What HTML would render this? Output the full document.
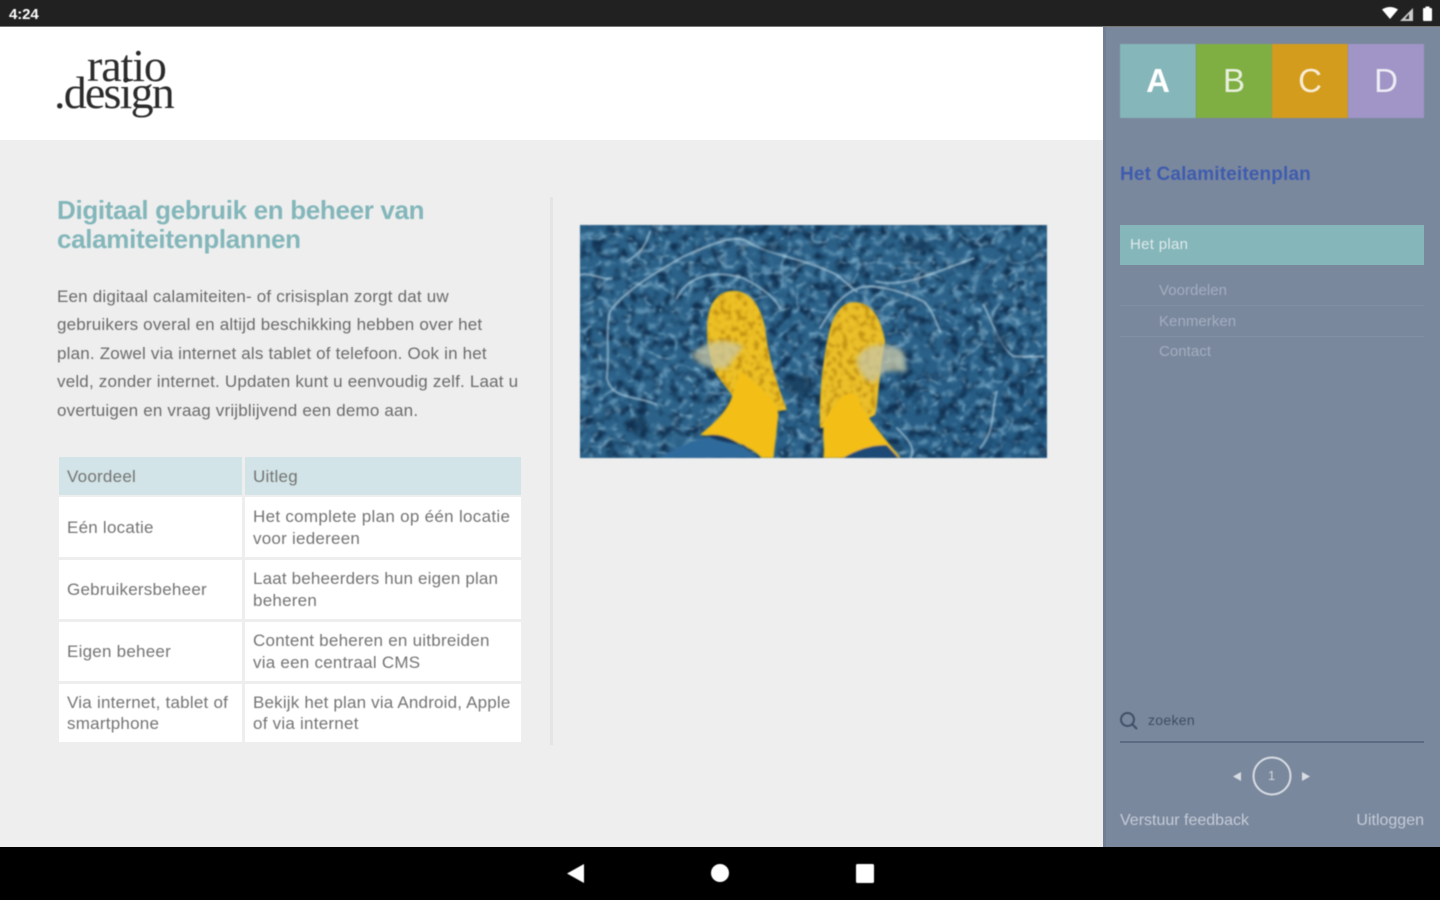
<!DOCTYPE html>
<html lang="nl"><head><meta charset="utf-8"><title>ratio.design</title>
<style>
html,body{margin:0;padding:0;width:1440px;height:900px;overflow:hidden;background:#eee}
body{font-family:"Liberation Sans",sans-serif;position:relative}
.a{position:absolute;white-space:nowrap}
.t{filter:blur(.65px)}
.b{font-size:17px;color:#6b6b6b;line-height:20px;left:57px;letter-spacing:.19px}
.c{font-size:17px;color:#747474;line-height:20px;letter-spacing:.24px}
.n{font-size:15px;color:#a3aebf;left:1159px;line-height:18px;letter-spacing:.05px}
.cell{position:absolute;background:#fff}
.abc{position:absolute;top:44px;height:74px;color:rgba(255,255,255,.82);font-size:33px;line-height:74px;text-align:center}
</style></head><body>
<div class="a" style="left:0;top:0;width:1440px;height:26px;background:#212121;border-bottom:1px solid #777;box-sizing:content-box"></div>
<div class="a t" style="left:9px;top:6px;color:#fff;font-size:15px;line-height:17px;font-weight:bold;letter-spacing:-.1px">4:24</div>
<svg class="a" style="left:1380px;top:5px;filter:blur(.5px)" width="56" height="18" viewBox="0 0 56 18"><path d="M2 4.500Q10 -.5 18 4.500L10 14Z" fill="#fff"/><path d="M33 3V16H20Z" fill="#ccc"/><path d="M29 9V14H25Z" fill="#212121"/><rect x="43" y="3" width="9" height="13" rx="1" fill="#fff"/><rect x="45.500" y="1.500" width="4" height="2" fill="#fff"/></svg>

<div class="a" style="left:0;top:27px;width:1103px;height:113px;background:#fff"></div>
<div class="a t" style="left:87px;top:44px;font-family:'Liberation Serif',serif;font-size:46px;line-height:44px;color:#2b2b2b;letter-spacing:-1.1px">ratio</div>
<div class="a t" style="left:54px;top:71px;font-family:'Liberation Serif',serif;font-size:46px;line-height:44px;color:#2b2b2b;letter-spacing:-1.800px">.design</div>

<div class="a t" style="left:57px;top:196px;font-size:26px;line-height:29px;font-weight:bold;color:#83b6ba;letter-spacing:-.33px">Digitaal gebruik en beheer van<br>calamiteitenplannen</div>
<div class="a t b" style="top:287px">Een digitaal calamiteiten- of crisisplan zorgt dat uw</div>
<div class="a t b" style="top:315px">gebruikers overal en altijd beschikking hebben over het</div>
<div class="a t b" style="top:344px">plan. Zowel via internet als tablet of telefoon. Ook in het</div>
<div class="a t b" style="top:372px">veld, zonder internet. Updaten kunt u eenvoudig zelf. Laat u</div>
<div class="a t b" style="top:401px">overtuigen en vraag vrijblijvend een demo aan.</div>

<div class="cell" style="left:59px;top:457px;width:183px;height:38px;background:#d2e4e7"></div>
<div class="cell" style="left:245px;top:457px;width:276px;height:38px;background:#d2e4e7"></div>
<div class="cell" style="left:59px;top:497px;width:183px;height:60px"></div>
<div class="cell" style="left:245px;top:497px;width:276px;height:60px"></div>
<div class="cell" style="left:59px;top:560px;width:183px;height:59px"></div>
<div class="cell" style="left:245px;top:560px;width:276px;height:59px"></div>
<div class="cell" style="left:59px;top:622px;width:183px;height:59px"></div>
<div class="cell" style="left:245px;top:622px;width:276px;height:59px"></div>
<div class="cell" style="left:59px;top:684px;width:183px;height:58px"></div>
<div class="cell" style="left:245px;top:684px;width:276px;height:58px"></div>

<div class="a t c" style="left:67px;top:467px">Voordeel</div>
<div class="a t c" style="left:253px;top:467px">Uitleg</div>
<div class="a t c" style="left:67px;top:518px">Eén locatie</div>
<div class="a t c" style="left:253px;top:507px;letter-spacing:.3px">Het complete plan op één locatie</div>
<div class="a t c" style="left:253px;top:529px">voor iedereen</div>
<div class="a t c" style="left:67px;top:580px">Gebruikersbeheer</div>
<div class="a t c" style="left:253px;top:569px;letter-spacing:.17px">Laat beheerders hun eigen plan</div>
<div class="a t c" style="left:253px;top:591px">beheren</div>
<div class="a t c" style="left:67px;top:642px">Eigen beheer</div>
<div class="a t c" style="left:253px;top:631px">Content beheren en uitbreiden</div>
<div class="a t c" style="left:253px;top:653px">via een centraal CMS</div>
<div class="a t c" style="left:67px;top:693px">Via internet, tablet of</div>
<div class="a t c" style="left:67px;top:714px">smartphone</div>
<div class="a t c" style="left:253px;top:693px;letter-spacing:.18px">Bekijk het plan via Android, Apple</div>
<div class="a t c" style="left:253px;top:714px">of via internet</div>

<div class="a" style="left:550px;top:197px;width:3px;height:548px;background:#e4e4e4"></div>

<svg class="a" style="left:580px;top:225px;filter:blur(.7px)" width="467" height="233" viewBox="30 30 1400 700" preserveAspectRatio="none">
<defs>
<filter id="w" x="0" y="0" width="100%" height="100%" color-interpolation-filters="sRGB"><feTurbulence type="turbulence" baseFrequency=".011 .014" numOctaves="3" seed="11"/><feColorMatrix values="0 0 0 0 .66  0 0 0 0 .82  0 0 0 0 .91  -9 0 0 0 1.35"/><feGaussianBlur stdDeviation="2.500"/></filter>
<filter id="f" x="0" y="0" width="100%" height="100%" color-interpolation-filters="sRGB"><feTurbulence type="fractalNoise" baseFrequency=".04" numOctaves="3" seed="5"/><feColorMatrix values="0 0 0 0 .55  0 0 0 0 .74  0 0 0 0 .85  5 0 0 0 -2.7"/><feGaussianBlur stdDeviation="3"/></filter>
<filter id="d" x="0" y="0" width="100%" height="100%" color-interpolation-filters="sRGB"><feTurbulence type="fractalNoise" baseFrequency=".03" numOctaves="3" seed="21"/><feColorMatrix values="0 0 0 0 .04  0 0 0 0 .15  0 0 0 0 .27  4 0 0 0 -1.9"/><feGaussianBlur stdDeviation="3"/></filter>
<filter id="s"><feGaussianBlur stdDeviation="2.500"/></filter>
<filter id="s2"><feGaussianBlur stdDeviation="7"/></filter>
<filter id="y" x="0" y="0" width="100%" height="100%" color-interpolation-filters="sRGB"><feTurbulence type="fractalNoise" baseFrequency=".06" numOctaves="2" seed="4"/><feColorMatrix values="0 0 0 0 .72  0 0 0 0 .52  0 0 0 0 .05  6 0 0 0 -3"/><feGaussianBlur stdDeviation="3"/></filter>
<clipPath id="bt"><path d="M490 228C540 228 570 270 585 340C592 410 610 480 650 585L620 590L500 560L440 480C410 420 400 320 425 270C440 240 465 228 490 228ZM850 262C900 262 930 300 945 380C925 470 925 560 915 600L880 600L800 560L750 640C745 540 760 420 780 340C795 290 820 262 850 262Z"/></clipPath>
<linearGradient id="g" x1="0" y1="0" x2="1" y2="1"><stop offset="0" stop-color="#2b6188"/><stop offset=".55" stop-color="#2c6289"/><stop offset="1" stop-color="#245a83"/></linearGradient>
</defs>
<rect x="30" y="30" width="1400" height="700" fill="url(#g)"/>
<rect x="30" y="30" width="1400" height="700" filter="url(#d)" opacity=".8"/>
<rect x="30" y="30" width="1400" height="700" filter="url(#f)" opacity=".5"/>
<rect x="30" y="30" width="1400" height="700" filter="url(#w)" opacity=".45"/>
<g fill="none" stroke="#c7deeb" stroke-width="6" stroke-linecap="round" filter="url(#s)" opacity=".6">
<path d="M120 290C160 230 260 170 340 125C420 90 500 50 540 85C600 120 700 130 800 180C830 205 850 225 860 230"/>
<path d="M30 180C60 170 110 200 125 190M240 50C230 80 220 110 170 140"/>
<path d="M750 340C780 290 810 240 860 222C900 200 1000 230 1060 260C1090 290 1095 320 1110 350"/>
<path d="M320 250C350 190 420 160 520 190C560 210 610 240 630 280"/>
<path d="M120 290C105 350 120 420 110 490C130 560 200 540 260 570"/>
<path d="M1240 270C1270 330 1290 400 1330 425L1420 425"/>
<path d="M1280 530C1260 590 1280 640 1230 700M980 640C1010 670 1040 700 1020 730"/>
<path d="M920 200C1000 220 1100 170 1210 130"/>
</g>
<g fill="#0d2c47" filter="url(#s2)" opacity=".55"><ellipse cx="612" cy="100" rx="40" ry="10"/><ellipse cx="1040" cy="90" rx="45" ry="16"/><ellipse cx="200" cy="630" rx="35" ry="25"/><ellipse cx="1020" cy="520" rx="40" ry="14"/><ellipse cx="1290" cy="380" rx="22" ry="40"/><ellipse cx="690" cy="510" rx="50" ry="30"/></g>
<path d="M270 730C330 690 390 670 440 660L560 725V730Z" fill="#2d6a9b" filter="url(#s)"/>
<g filter="url(#s)">
<path d="M490 228C540 228 570 270 585 340C592 410 610 480 650 585L620 590L610 680L560 640L440 480C410 420 400 320 425 270C440 240 465 228 490 228Z" fill="#edc128"/>
<path d="M850 262C900 262 930 300 945 380C925 470 925 560 915 600L880 620L750 640C745 540 760 420 780 340C795 290 820 262 850 262Z" fill="#ebc02b"/>
</g>
<rect x="380" y="220" width="600" height="430" clip-path="url(#bt)" filter="url(#y)" opacity=".75"/>
<g filter="url(#s)">
<path d="M510 470C560 510 610 540 625 600L610 730H575C550 700 480 670 390 660C440 620 480 580 490 530Z" fill="#f3be18"/>
<path d="M800 560C830 530 860 520 870 570C900 620 950 680 990 728L810 730L760 730C765 680 750 640 770 610Z" fill="#f3be18"/>
<path d="M410 662C450 655 490 670 560 722L520 690C480 685 440 680 410 662Z" fill="#12385c"/>
<path d="M820 730C860 705 910 690 950 692L985 730Z" fill="#1b4a75"/>
</g>
<g fill="#c9c7a6" filter="url(#s2)" opacity=".75"><path d="M365 420C410 370 470 370 520 395L470 460C430 470 380 450 365 420Z"/><path d="M860 430C890 380 950 380 1000 410L1010 470C970 470 930 460 920 500C890 510 860 470 860 430Z"/></g>
</svg>

<div class="a" style="left:1103px;top:27px;width:337px;height:820px;background:#7a889e"></div>
<div class="a" style="left:1103px;top:27px;width:3px;height:820px;background:#707f96"></div>
<div class="abc t" style="left:1120px;width:76px;background:#85b6ba;color:#fff;font-weight:bold">A</div>
<div class="abc t" style="left:1196px;width:76px;background:#7fae43">B</div>
<div class="abc t" style="left:1272px;width:76px;background:#d49c1d">C</div>
<div class="abc t" style="left:1348px;width:76px;background:#a194c6">D</div>
<div class="a t" style="left:1120px;top:163px;font-size:19px;line-height:23px;font-weight:bold;color:#3f5cae;letter-spacing:.15px">Het Calamiteitenplan</div>
<div class="a" style="left:1120px;top:225px;width:304px;height:40px;background:#85b6ba"></div>
<div class="a t" style="left:1130px;top:235px;font-size:15px;line-height:19px;color:#dfeaec;letter-spacing:.3px">Het plan</div>
<div class="a t n" style="top:282px">Voordelen</div>
<div class="a" style="left:1120px;top:305px;width:304px;height:1px;background:#8290a6"></div>
<div class="a t n" style="top:313px">Kenmerken</div>
<div class="a" style="left:1120px;top:336px;width:304px;height:1px;background:#8290a6"></div>
<div class="a t n" style="top:343px">Contact</div>

<svg class="a" style="left:1118px;top:710px;filter:blur(.5px)" width="22" height="22" viewBox="0 0 22 22"><circle cx="9.500" cy="9.500" r="6.500" fill="none" stroke="#3f4f64" stroke-width="2"/><path d="M14 14L19 19" stroke="#3f4f64" stroke-width="2"/></svg>
<div class="a t" style="left:1148px;top:711px;font-size:14px;line-height:18px;color:#3f4d61;letter-spacing:.3px">zoeken</div>
<div class="a" style="left:1120px;top:741px;width:304px;height:2px;background:#5c6b81"></div>
<svg class="a" style="left:1228px;top:756px;filter:blur(.5px)" width="88" height="40" viewBox="0 0 88 40"><path d="M5 20.500L13 16V25Z" fill="#d9dde3"/><path d="M82 20.500L74 16V25Z" fill="#d9dde3"/><circle cx="44" cy="20" r="18.500" fill="none" stroke="#d9dde3" stroke-width="2"/></svg>
<div class="a t" style="left:1268px;top:768px;font-size:13px;line-height:16px;color:#d0d5dc">1</div>
<div class="a t" style="left:1120px;top:811px;font-size:16px;line-height:20px;color:#c4ccd7">Verstuur feedback</div>
<div class="a t" style="right:16px;top:811px;font-size:16px;line-height:20px;color:#c4ccd7">Uitloggen</div>

<div class="a" style="left:0;top:847px;width:1440px;height:53px;background:#000"></div>
<svg class="a" style="left:560px;top:860px;filter:blur(.5px)" width="320" height="26" viewBox="0 0 320 26"><path d="M7 13.500L24 4V23Z" fill="#fff"/><circle cx="160" cy="13" r="9" fill="#fff"/><rect x="296" y="4" width="18" height="19" rx="1.500" fill="#fff"/></svg>
</body></html>
